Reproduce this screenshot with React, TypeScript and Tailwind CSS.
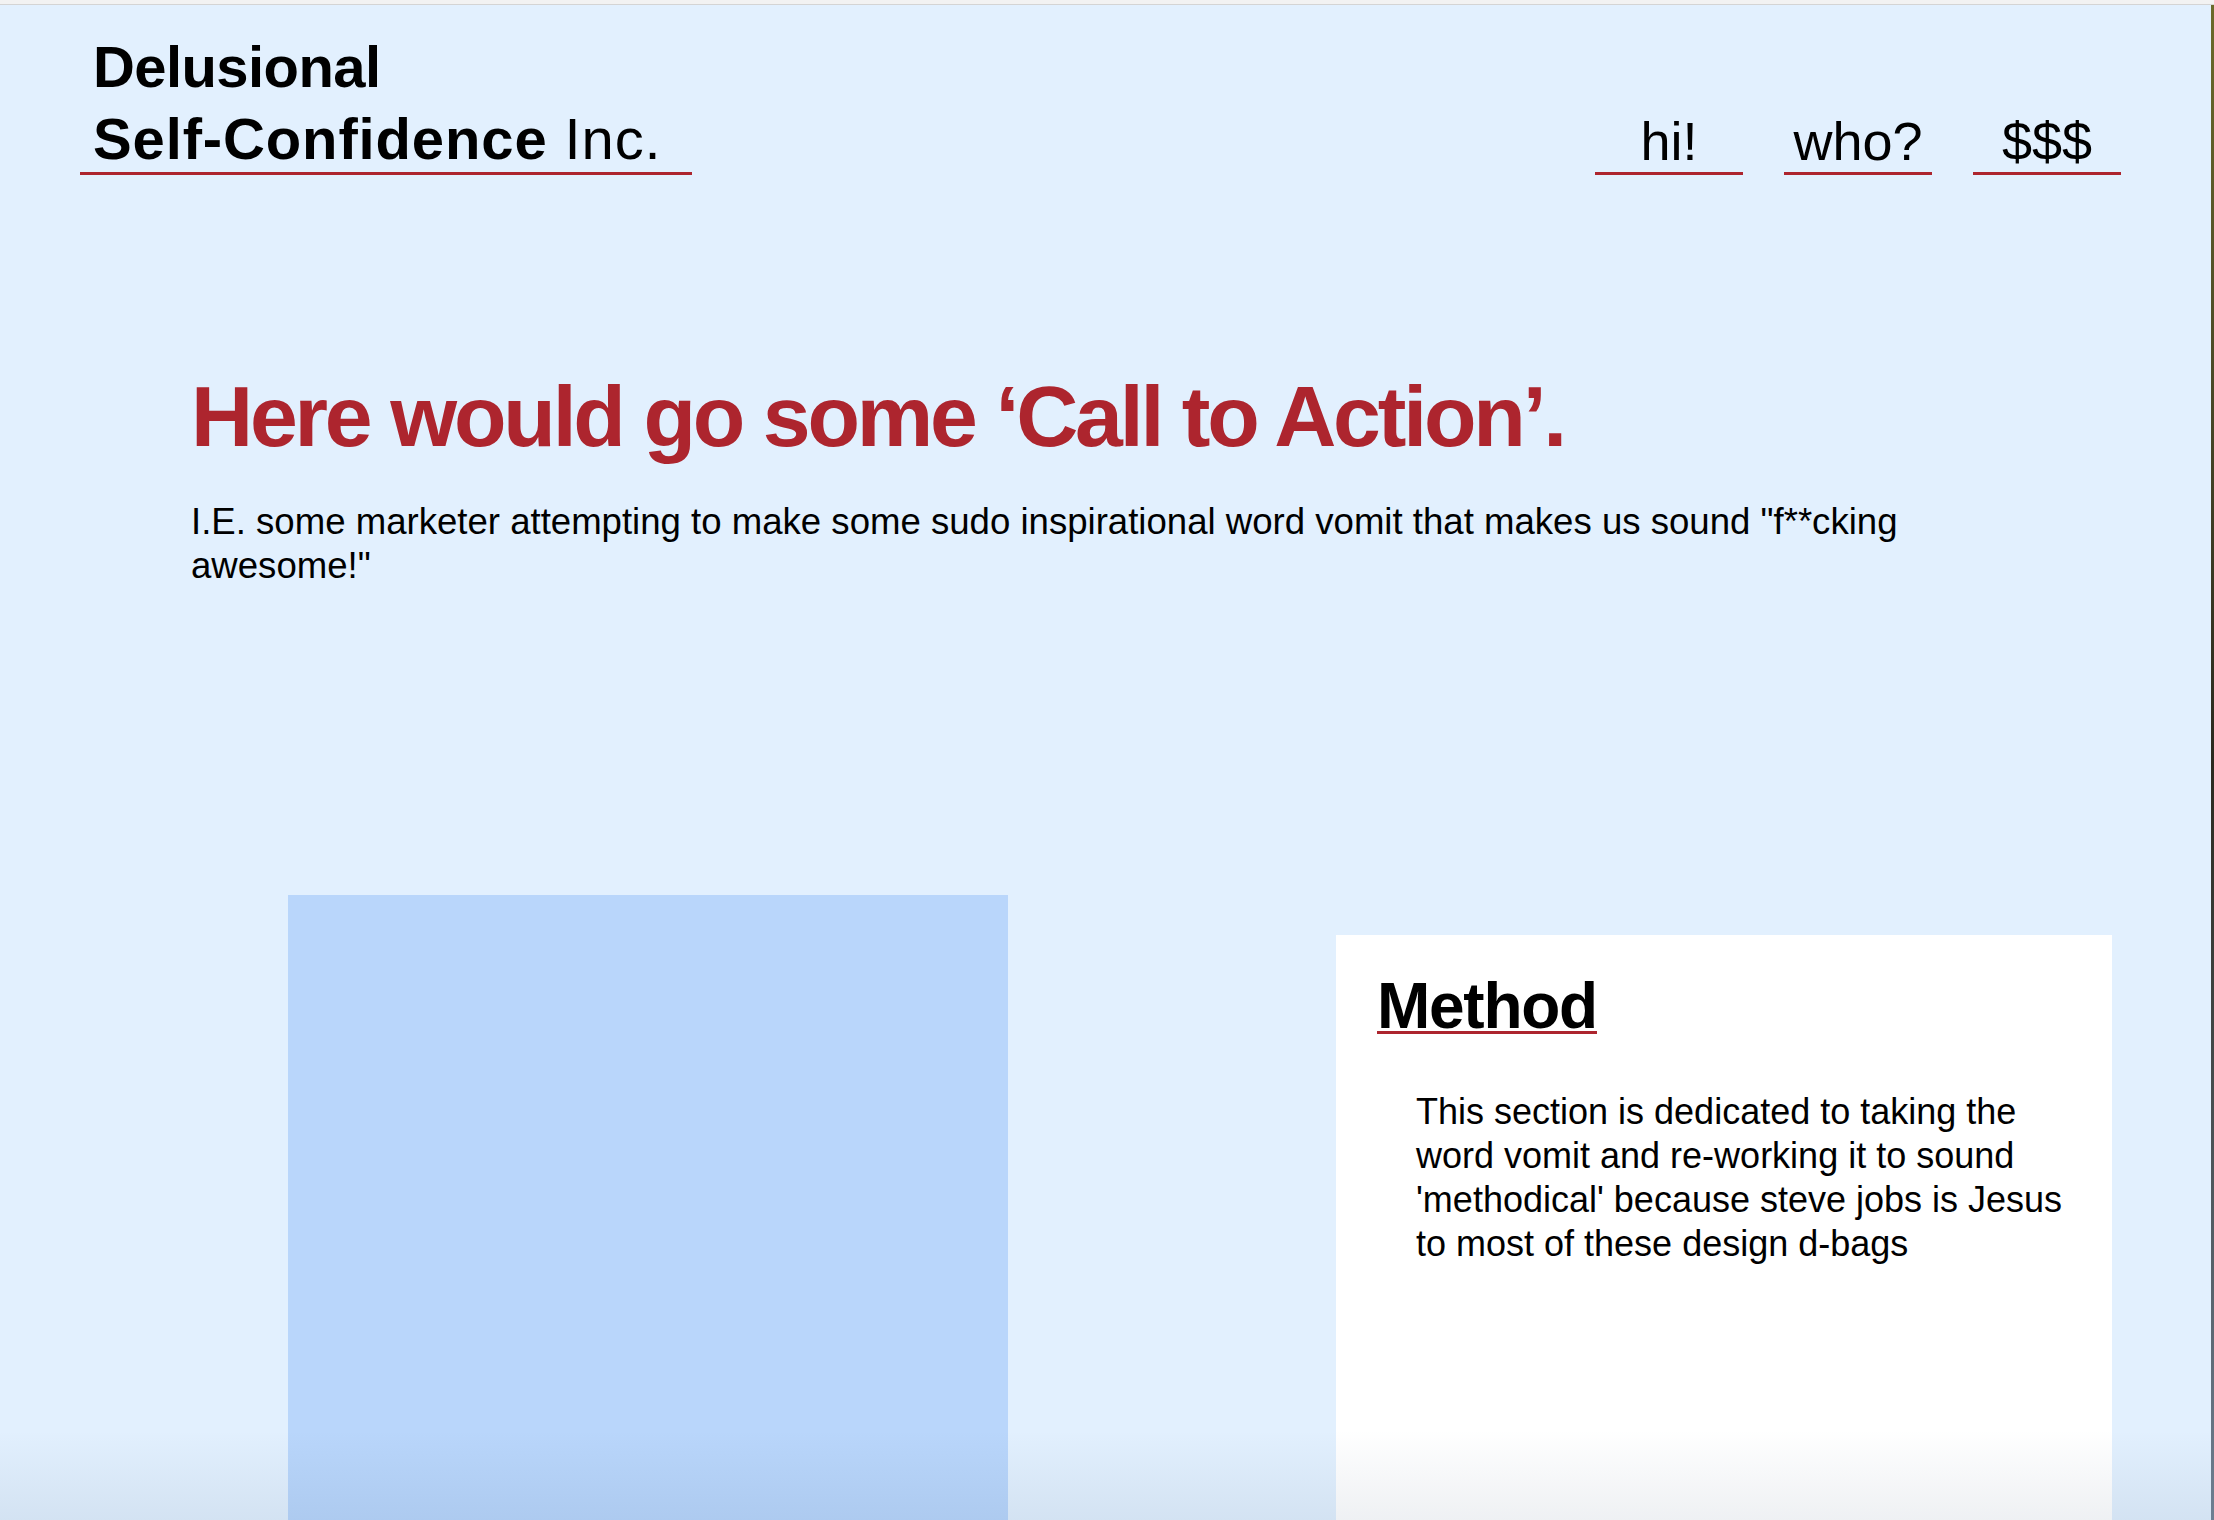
import React from 'react';

const RED = 'border-[#ad252e]';

const NAV = ['hi!', 'who?', '$$$'];

const App: React.FC = () => {
  return (
    <div className="h-screen overflow-hidden flex flex-col bg-[#e2f0fe] font-['Liberation_Sans',Arial,sans-serif] text-black relative">
      {/* browser chrome edge */}
      <div className="h-[5px] shrink-0 bg-[#f2f2f2] border-b border-[#d4d4d4]"></div>

      <div className="flex flex-1 min-h-0">
        <main className="flex-1 flex flex-col min-w-0">
          {/* Header */}
          <header className="flex justify-between items-end pl-[80px] pr-[90px] pt-[26px]">
            <div className={`border-b-[3px] ${RED} pl-[13px] pr-[30px]`}>
              <div className="text-[58px] leading-[72px] tracking-[-0.01em] mb-[-3px]">
                <div className="font-bold">Delusional</div>
                <div className="tracking-[0.015em]">
                  <span className="font-bold">Self-Confidence</span> Inc.
                </div>
              </div>
            </div>
            <nav className="flex gap-[41px]">
              {NAV.map((item) => (
                <a
                  key={item}
                  href="#"
                  className={`w-[148px] text-center text-[54px] leading-[56px] pb-[3px] border-b-[3px] ${RED}`}
                >
                  {item}
                </a>
              ))}
            </nav>
          </header>

          {/* Call to action */}
          <section className="pl-[191px] mt-[198px]">
            <h1 className="text-[86px] leading-[86px] font-bold text-[#ad252e] tracking-[-0.037em] whitespace-nowrap">
              Here would go some ‘Call to Action’.
            </h1>
            <p className="mt-[41px] text-[36.6px] leading-[44px] max-w-[1780px]">
              I.E. some marketer attempting to make some sudo inspirational word vomit that makes us sound "f**cking awesome!"
            </p>
          </section>

          {/* Method */}
          <section className="flex items-start pl-[288px] gap-[328px] mt-[307px]">
            <div className="w-[720px] h-[700px] shrink-0 bg-[#b9d6fb]"></div>
            <div className="w-[776px] h-[700px] shrink-0 bg-white mt-[40px] pt-[46px] pl-[41px] pr-[36px]">
              <h2 className={`inline-block text-[64px] leading-[50px] font-bold tracking-[-0.02em] border-b-[3px] ${RED}`}>
                Method
              </h2>
              <p className="mt-[55px] ml-[39px] text-[36px] leading-[44px] w-[665px]">
                This section is dedicated to taking the word vomit and re-working it to sound 'methodical' because steve jobs is Jesus to most of these design d-bags
              </p>
            </div>
          </section>
        </main>

        {/* sliver of desktop behind the window */}
        <aside className="w-[3px] shrink-0 bg-gradient-to-b from-[#6b6a2a] via-[#2a2a20] to-[#6d7f92]"></aside>
      </div>

      {/* window bottom shadow */}
      <div className="absolute bottom-0 left-0 right-[3px] h-[90px] bg-gradient-to-b from-transparent to-[rgba(20,50,90,0.07)] pointer-events-none"></div>
    </div>
  );
};

export default App;
